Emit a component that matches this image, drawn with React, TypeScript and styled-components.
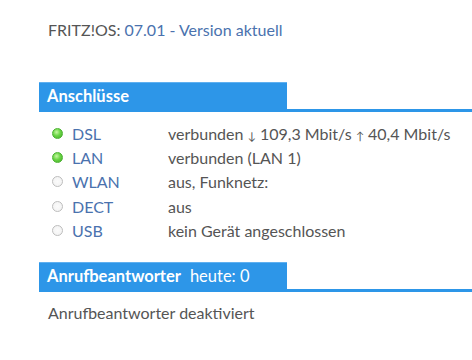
import type { ReactNode } from 'react';
import styled, { createGlobalStyle } from 'styled-components';

const GlobalStyle = createGlobalStyle`
  body {
    margin: 0;
    background: #ffffff;
    font-family: Lato, "Open Sans", sans-serif;
    color: #555555;
  }
`;

interface Connection {
  name: string;
  status: ReactNode;
  active: boolean;
}

const getConnections = (): Connection[] => [
  {
    name: 'DSL',
    status: (
      <>
        verbunden <Arrow>↓</Arrow> 109,3 Mbit/s <Arrow>↑</Arrow> 40,4 Mbit/s
      </>
    ),
    active: true,
  },
  { name: 'LAN', status: 'verbunden (LAN 1)', active: true },
  { name: 'WLAN', status: 'aus, Funknetz:', active: false },
  { name: 'DECT', status: 'aus', active: false },
  { name: 'USB', status: 'kein Gerät angeschlossen', active: false },
];

const App = () => (
  <>
    <GlobalStyle />
    <Page>
      <VersionLine>
        FRITZ!OS: <Link>07.01 - Version aktuell</Link>
      </VersionLine>

      <Section $gap={42}>
        <SectionHead>
          <Tab>Anschlüsse</Tab>
        </SectionHead>
        <ConnList>
          {getConnections().map((c) => (
            <ConnRow key={c.name}>
              <Dot $active={c.active} />
              <Link>{c.name}</Link>
              <span>{c.status}</span>
            </ConnRow>
          ))}
        </ConnList>
      </Section>

      <Section $gap={19}>
        <SectionHead>
          <Tab>
            Anrufbeantworter <TabNote>heute: 0</TabNote>
          </Tab>
        </SectionHead>
        <PlainText>Anrufbeantworter deaktiviert</PlainText>
      </Section>
    </Page>
  </>
);

export default App;

const Page = styled.div`
  display: flex;
  flex-direction: column;
  padding: 20px 0 0 39px;
  font-size: 16px;
`;

const VersionLine = styled.div`
  padding-left: 9px;
  line-height: 20px;
`;

const Link = styled.span`
  color: #4a72ae;
`;

const Arrow = styled.span`
  font-size: 11px;
`;

const Section = styled.div<{ $gap: number }>`
  display: flex;
  flex-direction: column;
  margin-top: ${(p) => p.$gap}px;
`;

const SectionHead = styled.div`
  display: flex;
  border-bottom: 3px solid #2d96e8;
`;

const Tab = styled.div`
  width: 248px;
  height: 27px;
  padding-left: 8px;
  display: flex;
  align-items: center;
  gap: 9px;
  background: #2d96e8;
  border-top: 1px solid #5fb0f0;
  box-sizing: border-box;
  color: #ffffff;
  font-weight: 700;
  font-size: 16.5px;
`;

const TabNote = styled.span`
  font-weight: 400;
`;

const ConnList = styled.div`
  display: flex;
  flex-direction: column;
  padding: 9px 0 0 13px;
`;

const ConnRow = styled.div`
  display: grid;
  grid-template-columns: 20px 96px 1fr;
  align-items: center;
  height: 24.4px;
`;

const Dot = styled.span<{ $active: boolean }>`
  width: 11px;
  height: 11px;
  border-radius: 50%;
  box-sizing: border-box;
  background: ${(p) =>
    p.$active
      ? 'radial-gradient(circle at 40% 35%, #c8f7a4 0%, #6bd646 45%, #40ab26 100%)'
      : 'radial-gradient(circle at 50% 50%, #fbfbfb 0%, #f0f0f0 100%)'};
  border: ${(p) => (p.$active ? '1px solid #4cb232' : '1.5px solid #bdbdbd')};
`;

const PlainText = styled.div`
  padding: 11px 0 0 9px;
  line-height: 20px;
`;
